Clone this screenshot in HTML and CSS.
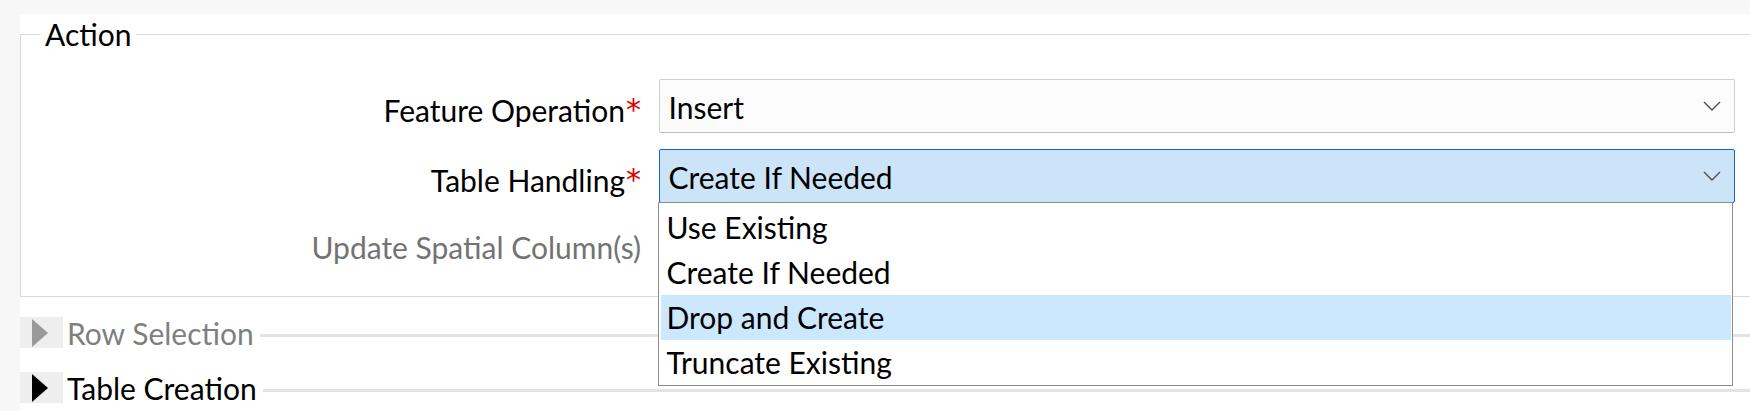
FILE: index.html
```html
<!DOCTYPE html>
<html lang="en">
<head>
<meta charset="utf-8">
<title>Action</title>
<link rel="stylesheet" href="styles.css">
</head>
<body>
<div class="panel">
  <fieldset class="group">
    <legend class="group-title">Action</legend>
    <div class="form">
      <div class="label">Feature Operation<span class="req">*</span></div>
      <div class="combo">
        <span class="combo-value">Insert</span>
        <svg class="chevron" width="18" height="10" viewBox="0 0 18 10"><path d="M1 1 L9 9 L17 1" fill="none" stroke="#505050" stroke-width="1.4"/></svg>
      </div>

      <div class="label">Table Handling<span class="req">*</span></div>
      <div class="combo combo-open">
        <span class="combo-value">Create If Needed</span>
        <svg class="chevron" width="18" height="10" viewBox="0 0 18 10"><path d="M1 1 L9 9 L17 1" fill="none" stroke="#505050" stroke-width="1.4"/></svg>
        <ul class="dropdown">
          <li class="option">Use Existing</li>
          <li class="option">Create If Needed</li>
          <li class="option option-hover">Drop and Create</li>
          <li class="option">Truncate Existing</li>
        </ul>
      </div>

      <div class="label label-disabled">Update Spatial Column(s)</div>
      <div class="placeholder"></div>
    </div>
  </fieldset>

  <div class="section section-disabled">
    <span class="toggle"><svg width="16" height="28" viewBox="0 0 16 28"><polygon points="0,0 16,14 0,28" fill="#9a9a9a"/></svg></span>
    <span class="section-title">Row Selection</span>
    <span class="rule"></span>
  </div>
  <div class="section section-second">
    <span class="toggle"><svg width="16" height="28" viewBox="0 0 16 28"><polygon points="0,0 16,14 0,28" fill="#000"/></svg></span>
    <span class="section-title">Table Creation</span>
    <span class="rule"></span>
  </div>
</div>
</body>
</html>
```

FILE: styles.css
```css
html, body {
  margin: 0;
  padding: 0;
}
body {
  background: #f7f7f7;
  width: 1750px;
  height: 411px;
  overflow: hidden;
  font-family: Lato, "Open Sans", sans-serif;
  font-size: 30px;
  color: #000;
}
.panel {
  margin: 14px 0 0 20px;
  padding-top: 3px;
  background: #fff;
  height: 394px;
  overflow: hidden;
}
.group {
  margin: 0 -20px 0 0;
  padding: 0 0 29px 19px;
  border: 1px solid #d9d9d9;
  min-width: 0;
}
.group-title {
  padding: 0 5px;
  line-height: 34px;
}
.form {
  display: grid;
  grid-template-columns: 601px 1076.5px;
  grid-template-rows: 54px 54px 48px;
  column-gap: 17.5px;
  row-gap: 16px;
  padding-top: 28px;
}
.label {
  align-self: center;
  text-align: right;
  padding-top: 8px;
  line-height: 34.8px;
  white-space: nowrap;
}
.label-disabled {
  color: #737373;
}
.req {
  font-family: "DejaVu Sans", sans-serif;
  font-size: 30px;
  color: #e00000;
  line-height: 0;
  vertical-align: 2px;
  margin-left: 1px;
}
.combo {
  position: relative;
  display: flex;
  align-items: center;
  justify-content: space-between;
  box-sizing: border-box;
  border: 1px solid #d0d0d0;
  border-bottom-color: #bdbdbd;
  border-radius: 2px;
  background: #fcfcfc;
  padding: 0 13px 0 9px;
}
.combo-value {
  padding-top: 3px;
  line-height: 34.8px;
}
.chevron {
  display: block;
}
.combo-open {
  background: #cce4f7;
  border-color: #1665c1;
}
.dropdown {
  position: absolute;
  top: 100%;
  left: -2px;
  right: 1px;
  margin: 0;
  padding: 2px 1px 0 2px;
  list-style: none;
  background: #fff;
  border: 1px solid #8c8c8c;
  z-index: 2;
}
.option {
  height: 45px;
  line-height: 45px;
  padding-left: 6px;
}
.option-hover {
  background: #cce8ff;
}
.section {
  display: flex;
  align-items: center;
  height: 31px;
  margin-top: 20px;
}
.section-second {
  margin-top: 24px;
}
.toggle {
  display: flex;
  align-items: center;
  box-sizing: border-box;
  width: 43px;
  height: 31px;
  padding-left: 12px;
  background: #eeeeee;
}
.toggle svg {
  display: block;
}
.section-title {
  margin-left: 4px;
  padding-top: 2px;
  line-height: 34.8px;
  white-space: nowrap;
}
.section-disabled .section-title {
  color: #7f7f7f;
}
.rule {
  flex: 1;
  height: 3px;
  margin: 5px 0 0 6px;
  background: #e3e3e3;
}
```
